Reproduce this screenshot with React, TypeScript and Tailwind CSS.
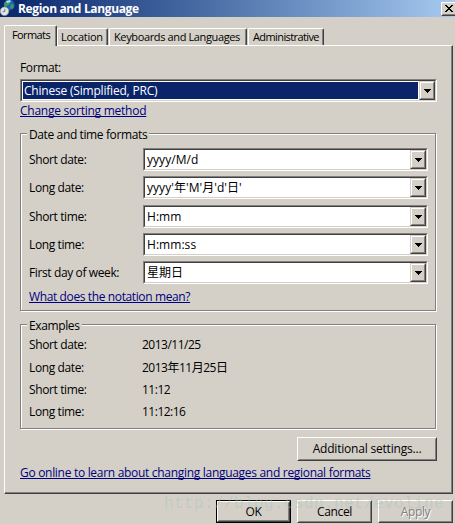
import type { ReactNode } from "react";

const TABS = [
  { label: "Location", className: "w-[51px] pl-[3px]", text: "tracking-[-0.25px]" },
  { label: "Keyboards and Languages", className: "w-[138px] pl-1", text: "tracking-[-0.37px]" },
  { label: "Administrative", className: "w-[76px] pl-1", text: "tracking-[-0.6px]" },
];

const FORMATS = [
  { label: "Short date:", value: "yyyy/M/d", gap: "mb-[5px]" },
  { label: "Long date:", value: "yyyy'年'M'月'd'日'", gap: "mb-[6px]" },
  { label: "Short time:", value: "H:mm", gap: "mb-[5px]" },
  { label: "Long time:", value: "H:mm:ss", gap: "mb-[5px]" },
  { label: "First day of week:", value: "星期日", gap: "" },
];

const EXAMPLES = [
  { label: "Short date:", value: "2013/11/25" },
  { label: "Long date:", value: "2013年11月25日" },
  { label: "Short time:", value: "11:12" },
  { label: "Long time:", value: "11:12:16" },
];

function Arrow() {
  return (
    <svg width="7" height="4" viewBox="0 0 7 4" shapeRendering="crispEdges">
      <path d="M0 0h7v1H6v1H5v1H4v1H3V3H2V2H1V1H0z" fill="#000" />
    </svg>
  );
}

function Combo({ value, selected = false }: { value: string; selected?: boolean }) {
  return (
    <div className="h-[23px] w-full border border-t-[#808080] border-r-white border-b-white border-l-[#808080]">
      <div className="flex h-full border border-t-[#404040] border-r-[#d4d0c8] border-b-[#d4d0c8] border-l-[#404040] bg-white">
        <div
          className={`flex min-w-0 flex-1 items-center ${
            selected ? "m-px bg-[#0a246a] pl-px tracking-[-0.2px] text-white" : "pl-[2px] tracking-[0.05px]"
          }`}
        >
          <span className="whitespace-pre">{value}</span>
        </div>
        <button className="h-full w-4 border border-t-[#d4d0c8] border-r-[#404040] border-b-[#404040] border-l-[#d4d0c8]">
          <span className="flex h-full items-center justify-center border border-t-white border-r-[#808080] border-b-[#808080] border-l-white bg-[#d4d0c8]">
            <Arrow />
          </span>
        </button>
      </div>
    </div>
  );
}

// Etched frame: a gray line with a white one below and to the right of it
function Group({ title, className, children }: { title: string; className: string; children: ReactNode }) {
  return (
    <section className={`border border-[#808080] shadow-[1px_1px_0_#fff,inset_1px_1px_0_#fff] ${className}`}>
      <h2 className="-mt-[7px] ml-[6px] flex h-4 w-fit items-center bg-[#d4d0c8] px-[2px]">{title}</h2>
      {children}
    </section>
  );
}

function Button({ children, className }: { children: ReactNode; className: string }) {
  return (
    <button className={`border border-t-white border-r-[#404040] border-b-[#404040] border-l-white ${className}`}>
      <span className="flex h-full items-center justify-center border border-t-[#d4d0c8] border-r-[#808080] border-b-[#808080] border-l-[#d4d0c8]">
        {children}
      </span>
    </button>
  );
}

function Link({ children, className }: { children: ReactNode; className: string }) {
  return (
    <a
      className={`block h-4 w-fit leading-4 whitespace-nowrap text-[#00007f] underline decoration-1 underline-offset-1 [text-decoration-skip-ink:none] ${className}`}
    >
      {children}
    </a>
  );
}

function RegionIcon() {
  return (
    <svg width="16" height="17" viewBox="0 0 16 17">
      <circle cx="9.2" cy="5" r="5.4" fill="#1f62b4" />
      <path d="M5 2l4-1 1 3-3 2-2 1-1-3zM11 4l3 1-1 4-3-1z" fill="#3f9a62" />
      <path d="M6 1l4-1 1 2-4 1z" fill="#a8dcf3" />
      <circle cx="4.5" cy="11.3" r="4.2" fill="#e4e6e2" stroke="#9aa6ac" strokeWidth=".7" />
      <path d="M4.8 8.8v2.8H2.6" fill="none" stroke="#5d6b75" strokeWidth=".9" />
    </svg>
  );
}

export default function App() {
  return (
    <div className="relative flex h-[524px] w-[455px] flex-col overflow-hidden bg-[#d4d0c8] font-['Open_Sans','Noto_Sans_CJK_SC',sans-serif] text-[12px] leading-4 tracking-[-0.38px] text-black">
      <header className="flex h-[17px] shrink-0 items-center bg-linear-to-r from-[#0a246a] to-[#a6caf0]">
        <RegionIcon />
        <h1 className="ml-[2px] flex-1 text-[12px] font-bold tracking-[-0.35px] whitespace-nowrap text-white">
          Region and Language
        </h1>
        <Button className="-mr-[2px] h-[14px] w-4 bg-[#d4d0c8]">
          <svg width="8" height="7" viewBox="0 0 8 7" shapeRendering="crispEdges">
            <path d="M0 0h2v1h1v1h2V1h1V0h2v1H7v1H6v1H5v1h1v1h1v1h1v1H6V6H5V5H3v1H2v1H0V6h1V5h1V4h1V3H2V2H1V1H0z" />
          </svg>
        </Button>
      </header>

      <nav className="mt-2 flex h-5 shrink-0 items-end pl-1 text-[11px]">
        <div className="z-10 -mb-px flex h-[21px] w-[53px] rounded-t-[2px] border border-b-0 border-t-white border-r-[#404040] border-l-white bg-[#d4d0c8] pt-px pl-[7px] tracking-[-0.6px] shadow-[inset_-1px_0_0_#808080]">
          Formats
        </div>
        {TABS.map((t, i) => (
          <div
            key={t.label}
            className={`flex h-[17px] items-center rounded-t-[2px] border border-b-0 border-t-white border-r-[#404040] border-l-white whitespace-nowrap shadow-[inset_-1px_0_0_#808080] ${i > 0 ? "ml-px" : ""} ${t.className}`}
          >
            <span className={t.text}>{t.label}</span>
          </div>
        ))}
      </nav>

      <main className="mr-[2px] ml-1 h-[449px] shrink-0 border border-t-white border-r-[#404040] border-b-[#404040] border-l-white shadow-[inset_-1px_-1px_0_#808080]">
        <div className="mr-[15px] ml-[15px]">
          <p className="mt-[14px] h-4">Format:</p>
          <div className="mt-[3px]">
            <Combo value="Chinese (Simplified, PRC)" selected />
          </div>
          <Link className="mt-px tracking-[-0.25px]">Change sorting method</Link>

          <Group title="Date and time formats" className="mt-[14px] mr-px h-[178px]">
            <div className="pt-[5px] pr-[7px] pl-2">
              {FORMATS.map((f) => (
                <div key={f.label} className={`flex h-[23px] items-center ${f.gap}`}>
                  <span className="w-[114px] shrink-0">{f.label}</span>
                  <Combo value={f.value} />
                </div>
              ))}
              <Link className="mt-[5px]">What does the notation mean?</Link>
            </div>
          </Group>

          <Group title="Examples" className="mt-[13px] mr-px h-[105px]">
            <dl className="pl-2">
              {EXAMPLES.map((e) => (
                <div key={e.label} className="flex h-[22.4px] items-center">
                  <dt className="w-[113px] shrink-0">{e.label}</dt>
                  <dd className="tracking-[-0.5px]">{e.value}</dd>
                </div>
              ))}
            </dl>
          </Group>

          <div className="mt-2 flex justify-end">
            <Button className="h-6 w-[140px] tracking-[-0.2px]">Additional settings...</Button>
          </div>
          <Link className="mt-1 tracking-[-0.3px]">
            Go online to learn about changing languages and regional formats
          </Link>
        </div>
      </main>

      <footer className="mt-[6px] flex shrink-0 justify-end gap-[6px] pr-[2px]">
        <div className="h-[23px] w-[75px] border border-black">
          <Button className="h-full w-full">OK</Button>
        </div>
        <Button className="h-[23px] w-[75px]">Cancel</Button>
        <Button className="h-[23px] w-[75px]">
          <span className="text-[#808080] [text-shadow:1px_1px_0_#fff]">Apply</span>
        </Button>
      </footer>

      <div className="pointer-events-none absolute top-[494px] left-[164px] font-['Liberation_Mono',monospace] text-[16px] leading-5 tracking-[0.4px] whitespace-nowrap text-[#9fc4b4]/40">
        http://blog.csdn.net/evoline
      </div>
    </div>
  );
}
